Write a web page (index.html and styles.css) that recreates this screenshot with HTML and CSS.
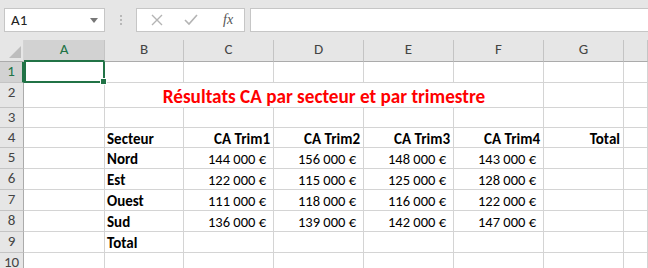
FILE: index.html
```html
<!doctype html>
<html lang="fr">
<head>
	<meta charset="UTF-8">
	<title>Résultats CA</title>
	<link rel="stylesheet" href="styles.css">
</head>
<body>
	<div class="bar">
		<div class="namebox">
			<span>A1</span>
			<svg class="caret" width="8" height="5" viewBox="0 0 8 5"><path d="M0 0h8L4 5z" fill="#777"/></svg>
		</div>
		<div class="dots"><i></i><i></i><i></i></div>
		<div class="fxbox">
			<svg width="12" height="12" viewBox="0 0 12 12"><path d="M1 1l10 10M11 1L1 11" stroke="#b4b4b4" stroke-width="1.4" fill="none"/></svg>
			<svg width="14" height="12" viewBox="0 0 14 12"><path d="M1 6l4 4 8-9" stroke="#b4b4b4" stroke-width="1.6" fill="none"/></svg>
			<span class="fx">fx</span>
		</div>
		<div class="formula"></div>
	</div>

	<div class="sheet">
		<!-- en-tetes de colonnes -->
		<div class="corner"><svg width="12" height="12" viewBox="0 0 12 12"><path d="M12 0v12H0z" fill="#bdbdbd"/></svg></div>
		<div class="colhead sel">A</div>
		<div class="colhead">B</div>
		<div class="colhead">C</div>
		<div class="colhead">D</div>
		<div class="colhead">E</div>
		<div class="colhead">F</div>
		<div class="colhead">G</div>
		<div class="colhead"></div>

		<!-- ligne 1 -->
		<div class="rowhead sel">1</div>
		<div class="cell active"><span class="handle"></span></div>
		<div class="cell"></div><div class="cell"></div><div class="cell"></div><div class="cell"></div><div class="cell"></div><div class="cell"></div><div class="cell"></div>

		<!-- ligne 2 -->
		<div class="rowhead">2</div>
		<div class="cell"></div>
		<div class="cell title">Résultats CA par secteur et par trimestre</div>
		<div class="cell"></div><div class="cell"></div>

		<!-- ligne 3 -->
		<div class="rowhead">3</div>
		<div class="cell"></div><div class="cell"></div><div class="cell"></div><div class="cell"></div><div class="cell"></div><div class="cell"></div><div class="cell"></div><div class="cell"></div>

		<!-- ligne 4 -->
		<div class="rowhead">4</div>
		<div class="cell"></div>
		<div class="cell b">Secteur</div>
		<div class="cell b r">CA Trim1</div>
		<div class="cell b r">CA Trim2</div>
		<div class="cell b r">CA Trim3</div>
		<div class="cell b r">CA Trim4</div>
		<div class="cell b r">Total</div>
		<div class="cell"></div>

		<div class="rowhead">5</div>
		<div class="cell"></div>
		<div class="cell b">Nord</div>
		<div class="cell num">144 000 €</div>
		<div class="cell num">156 000 €</div>
		<div class="cell num">148 000 €</div>
		<div class="cell num">143 000 €</div>
		<div class="cell"></div><div class="cell"></div>

		<div class="rowhead">6</div>
		<div class="cell"></div>
		<div class="cell b">Est</div>
		<div class="cell num">122 000 €</div>
		<div class="cell num">115 000 €</div>
		<div class="cell num">125 000 €</div>
		<div class="cell num">128 000 €</div>
		<div class="cell"></div><div class="cell"></div>

		<div class="rowhead">7</div>
		<div class="cell"></div>
		<div class="cell b">Ouest</div>
		<div class="cell num">111 000 €</div>
		<div class="cell num">118 000 €</div>
		<div class="cell num">116 000 €</div>
		<div class="cell num">122 000 €</div>
		<div class="cell"></div><div class="cell"></div>

		<div class="rowhead">8</div>
		<div class="cell"></div>
		<div class="cell b">Sud</div>
		<div class="cell num">136 000 €</div>
		<div class="cell num">139 000 €</div>
		<div class="cell num">142 000 €</div>
		<div class="cell num">147 000 €</div>
		<div class="cell"></div><div class="cell"></div>

		<div class="rowhead">9</div>
		<div class="cell"></div>
		<div class="cell b">Total</div>
		<div class="cell"></div><div class="cell"></div><div class="cell"></div><div class="cell"></div><div class="cell"></div><div class="cell"></div>

		<div class="rowhead">10</div>
		<div class="cell"></div><div class="cell"></div><div class="cell"></div><div class="cell"></div><div class="cell"></div><div class="cell"></div><div class="cell"></div><div class="cell"></div>
	</div>
</body>
</html>
```
FILE: styles.css
```css
body{
	margin: 0;
	width: 648px;
	height: 268px;
	overflow: hidden;
	background: #fff;
	font-family: Carlito, Lato, "Liberation Sans", sans-serif;
	font-size: 15px;
	color: #000;
}
.bar{
	height: 40px;
	background: #e6e6e6;
	display: flex;
	align-items: flex-start;
	padding: 8px 0 0 4px;
	box-sizing: border-box;
}
.namebox{
	width: 101px;
	height: 24px;
	box-sizing: border-box;
	border: 1px solid #c6c6c6;
	background: #fff;
	display: flex;
	align-items: center;
	justify-content: space-between;
	padding: 0 6px 0 6px;
	color: #222;
}
.dots{
	width: 31px;
	height: 24px;
	display: flex;
	flex-direction: column;
	align-items: center;
	justify-content: center;
	gap: 2px;
}
.dots i{
	width: 2px;
	height: 2px;
	background: #b8b8b8;
}
.fxbox{
	width: 109px;
	height: 24px;
	box-sizing: border-box;
	border: 1px solid #c6c6c6;
	background: #fff;
	display: flex;
	align-items: center;
	padding: 0 10px 0 14px;
	gap: 21px;
}
.fx{
	font-family: "Liberation Serif", serif;
	font-style: italic;
	font-size: 14px;
	color: #555;
	margin-left: 4px;
}
.formula{
	flex: 1;
	height: 24px;
	margin-left: 5px;
	box-sizing: border-box;
	border: 1px solid #c6c6c6;
	border-right: 0;
	background: #fff;
}
.sheet{
	display: grid;
	grid-template-columns: 24px 81px 79px 90px 90px 90px 90px 80px 1fr;
	grid-template-rows: 22px 21px 25px 20px 20px 21px 21px 21px 21px 21px 21px;
}
.sheet > div{
	box-sizing: border-box;
	border-right: 1px solid #d4d4d4;
	border-bottom: 1px solid #d4d4d4;
	line-height: 19px;
	white-space: nowrap;
}
.corner{
	background: #e6e6e6;
	display: flex;
	align-items: flex-end;
	justify-content: flex-end;
	padding: 0 2px 3px 0;
}
.sheet > .corner,.sheet > .colhead{
	border-bottom-color: #ababab;
}
.colhead{
	background: #e6e6e6;
	text-align: center;
	color: #444;
	line-height: 21px;
	border-right-color: #c4c4c4 !important;
}
.rowhead{
	background: #e6e6e6;
	text-align: center;
	color: #444;
	border-right-color: #ababab !important;
	border-bottom-color: #c4c4c4 !important;
}
.sheet > .sel{
	background: #d2d2d2;
	color: #217346;
}
.sheet > .colhead.sel{
	border-bottom: 2px solid #217346;
}
.sheet > .rowhead.sel{
	border-right: 2px solid #217346 !important;
}
.cell{
	position: relative;
	padding-top: 2px;
}
.sheet > .active{
	border: 2px solid #217346;
	border-left: 0;
	border-top: 0;
	box-shadow: inset 2px 0 0 #217346;
}
.handle{
	position: absolute;
	right: -4px;
	bottom: -4px;
	width: 5px;
	height: 5px;
	background: #217346;
	border: 1px solid #fff;
	z-index: 2;
}
.sheet > .title{
	grid-column: 3 / 8;
	text-align: center;
	color: #ff0000;
	font-weight: bold;
	font-size: 19.2px;
	line-height: 21px;
	padding-top: 3px;
}
.b{
	font-weight: bold;
	padding-left: 2px;
}
.r{
	text-align: right;
	padding-right: 3px;
}
.num{
	text-align: right;
	padding-right: 7px;
	font-size: 14.5px;
}
```
